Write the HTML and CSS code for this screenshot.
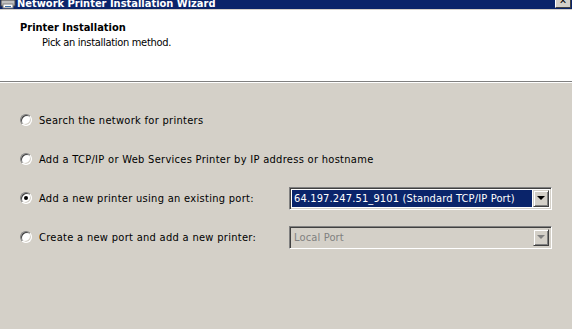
FILE: index.html
```html
<!DOCTYPE html>
<html>
<head>
<meta charset="utf-8">
<link rel="stylesheet" href="styles.css">
</head>
<body>
<div class="window">
  <div class="titlebar">
    <svg class="ticon" width="16" height="9" viewBox="0 0 16 9">
      <rect x="1" y="0" width="14" height="6" fill="#c0c0c0" stroke="#404040" stroke-width="1"/>
      <rect x="3" y="4" width="10" height="4" fill="#ffffff" stroke="#808080" stroke-width="1"/>
      <rect x="5" y="6" width="6" height="1" fill="#3a6ea5"/>
    </svg>
    <span class="ttext">Network Printer Installation Wizard</span>
    <span class="tbtn"><span class="tx">✕</span></span>
  </div>
  <div class="topedge"></div>
  <div class="header">
    <div class="htitle">Printer Installation</div>
    <div class="hsub">Pick an installation method.</div>
  </div>
  <div class="sep"></div>
  <div class="content">
    <div class="row">
      <span class="radio"></span>
      <span class="label">Search the network for printers</span>
    </div>
    <div class="row">
      <span class="radio"></span>
      <span class="label">Add a TCP/IP or Web Services Printer by IP address or hostname</span>
    </div>
    <div class="row">
      <span class="radio checked"></span>
      <span class="label fixed">Add a new printer using an existing port:</span>
      <div class="combo">
        <div class="cval selected">64.197.247.51_9101 (Standard TCP/IP Port)</div>
        <div class="cbtn"><span class="arrow"></span></div>
      </div>
    </div>
    <div class="row">
      <span class="radio"></span>
      <span class="label fixed">Create a new port and add a new printer:</span>
      <div class="combo disabled">
        <div class="cval">Local Port</div>
        <div class="cbtn"><span class="arrow"></span></div>
      </div>
    </div>
  </div>
</div>
</body>
</html>
```

FILE: styles.css
```css
html, body {
  margin: 0;
  padding: 0;
}
body {
  width: 572px;
  height: 329px;
  overflow: hidden;
  background: #d4d0c8;
  font-family: "DejaVu Sans Condensed", "DejaVu Sans", sans-serif;
  font-size: 11px;
  color: #000;
}
.window {
  display: flex;
  flex-direction: column;
  height: 329px;
}
.titlebar {
  height: 9px;
  background: #0a246a;
  display: flex;
  align-items: flex-end;
  overflow: hidden;
  position: relative;
}
.ticon {
  display: block;
  flex: none;
  align-self: flex-start;
}
.ttext {
  color: #fff;
  font-weight: bold;
  font-size: 11px;
  line-height: 13px;
  margin-left: 1px;
  margin-bottom: -1px;
  white-space: nowrap;
}
.tbtn {
  position: absolute;
  right: 1px;
  top: -6px;
  width: 14px;
  height: 12px;
  background: #d4d0c8;
  border-top: 1px solid #fff;
  border-left: 1px solid #fff;
  border-right: 1px solid #404040;
  border-bottom: 1px solid #404040;
  display: flex;
  justify-content: center;
  align-items: flex-end;
  overflow: hidden;
}
.tx {
  font-size: 10px;
  line-height: 10px;
  font-weight: bold;
  color: #000;
  margin-bottom: 1px;
}
.topedge {
  height: 1px;
  background: #d4d0c8;
}
.header {
  background: #fff;
  height: 71px;
  box-sizing: border-box;
  padding: 10px 0 0 20px;
}
.htitle {
  font-weight: bold;
  line-height: 15px;
}
.hsub {
  margin-left: 22px;
  line-height: 15px;
  letter-spacing: -0.3px;
}
.sep {
  height: 1px;
  background: #808080;
  border-bottom: 1px solid #fff;
}
.content {
  display: flex;
  flex-direction: column;
  gap: 17px;
  padding: 26px 0 0 20px;
}
.row {
  display: flex;
  align-items: center;
  height: 22px;
}
.radio {
  flex: none;
  width: 12px;
  height: 12px;
  box-sizing: border-box;
  border-radius: 50%;
  background: #fff;
  border: 1px solid;
  border-color: #808080 #fff #fff #808080;
  box-shadow: inset 1px 1px 0 #404040, inset -1px -1px 0 #d4d0c8;
  position: relative;
  margin-right: 7px;
}
.radio.checked::after {
  content: "";
  position: absolute;
  left: 3px;
  top: 3px;
  width: 4px;
  height: 4px;
  border-radius: 50%;
  background: #000;
}
.label {
  white-space: nowrap;
  letter-spacing: 0.3px;
}
.label.fixed {
  width: 250px;
  flex: none;
}
.combo {
  width: 263px;
  height: 23px;
  box-sizing: border-box;
  border: 1px solid;
  border-color: #808080 #fff #fff #808080;
  box-shadow: inset 1px 1px 0 #404040, inset -1px -1px 0 #d4d0c8;
  background: #fff;
  display: flex;
  padding: 2px;
}
.cval {
  flex: 1;
  line-height: 17px;
  padding-left: 2px;
  white-space: nowrap;
  overflow: hidden;
  letter-spacing: 0.15px;
}
.cval.selected {
  background: #0a246a;
  color: #fff;
  margin-right: 1px;
}
.cbtn {
  width: 16px;
  flex: none;
  box-sizing: border-box;
  background: #d4d0c8;
  border: 1px solid;
  border-color: #d4d0c8 #404040 #404040 #d4d0c8;
  box-shadow: inset 1px 1px 0 #fff, inset -1px -1px 0 #808080;
  display: flex;
  align-items: center;
  justify-content: center;
}
.arrow {
  width: 0;
  height: 0;
  border-left: 4px solid transparent;
  border-right: 4px solid transparent;
  border-top: 4px solid #000;
}
.combo.disabled {
  background: #d4d0c8;
}
.combo.disabled .cval {
  color: #808080;
}
.combo.disabled .arrow {
  border-top-color: #808080;
}
```
